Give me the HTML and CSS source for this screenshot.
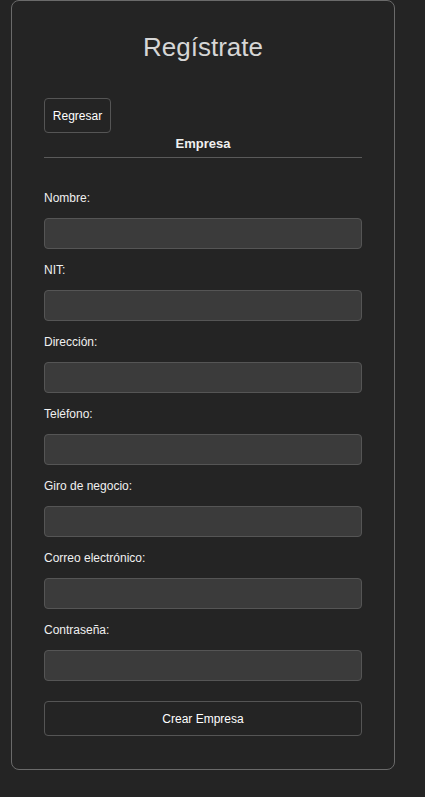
FILE: index.html
```html
<!DOCTYPE html>
<html lang="es">
<head>
<meta charset="utf-8">
<title>Regístrate</title>
<link rel="stylesheet" href="styles.css">
</head>
<body>
<div class="card">
  <h1 class="title">Regístrate</h1>
  <div class="back-row"><button class="btn btn-back" type="button">Regresar</button></div>
  <div class="section">Empresa</div>
  <form class="form">
    <label class="label">Nombre:</label>
    <input class="input" type="text">
    <label class="label">NIT:</label>
    <input class="input" type="text">
    <label class="label">Dirección:</label>
    <input class="input" type="text">
    <label class="label">Teléfono:</label>
    <input class="input" type="text">
    <label class="label">Giro de negocio:</label>
    <input class="input" type="text">
    <label class="label">Correo electrónico:</label>
    <input class="input" type="email">
    <label class="label">Contraseña:</label>
    <input class="input" type="password">
    <button class="btn btn-submit" type="button">Crear Empresa</button>
  </form>
</div>
</body>
</html>
```
FILE: styles.css
```css
html, body {
  margin: 0;
  padding: 0;
  background: #242424;
}
body {
  padding: 0 30px 0 11px;
  font-family: "Liberation Sans", Arial, sans-serif;
  color: #f0f0f0;
}
.card {
  width: 384px;
  box-sizing: border-box;
  border: 1px solid #6a6a6a;
  border-radius: 8px;
  padding: 31px 32px 32px;
  display: flex;
  flex-direction: column;
}
.title {
  margin: 0;
  font-size: 26px;
  line-height: 30px;
  font-weight: normal;
  color: #d6d6d6;
  text-align: center;
}
.back-row {
  margin-top: 36px;
  display: flex;
}
.btn {
  font-family: "Liberation Sans", Arial, sans-serif;
  font-size: 12px;
  color: #ffffff;
  background: transparent;
  border: 1px solid #555555;
  border-radius: 4px;
  height: 35px;
  cursor: pointer;
}
.btn-back {
  width: 67px;
  padding: 0;
}
.section {
  margin-top: 3px;
  font-size: 13px;
  line-height: 15px;
  font-weight: bold;
  text-align: center;
  color: #f0f0f0;
  padding-bottom: 6px;
  border-bottom: 1px solid #5a5a5a;
}
.form {
  display: flex;
  flex-direction: column;
  margin-top: 33px;
}
.label {
  font-size: 12px;
  line-height: 14px;
  color: #f0f0f0;
}
.input {
  margin: 13px 0 14px;
  height: 31px;
  box-sizing: border-box;
  background: #3b3b3b;
  border: 1px solid #555555;
  border-radius: 4px;
  color: #fff;
}
.btn-submit {
  margin-top: 6px;
  margin-bottom: 1px;
  width: 100%;
}
```
